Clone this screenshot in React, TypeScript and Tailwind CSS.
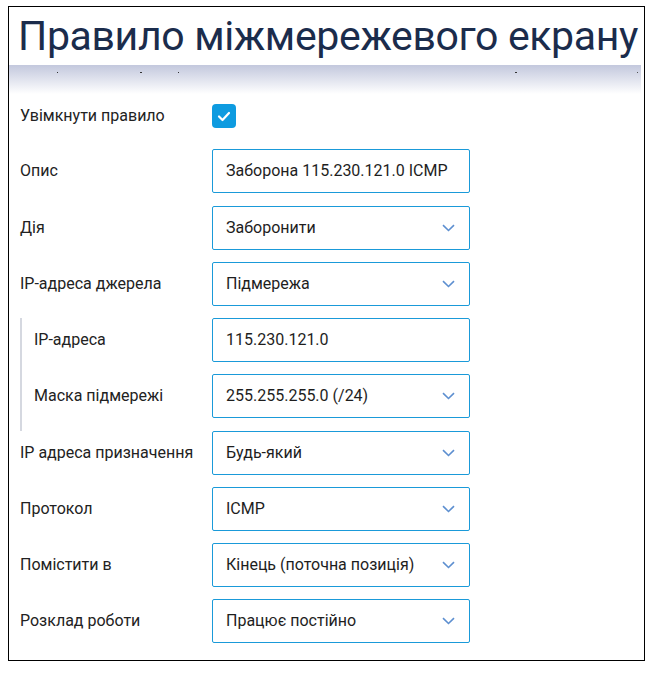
import type { ReactNode } from "react";

const font = { fontFamily: "Roboto, 'Noto Sans', 'Liberation Sans', sans-serif" };

function Chevron() {
  return (
    <svg width="13" height="8" viewBox="0 0 13 8" className="absolute right-[14px] top-1/2 -translate-y-1/2">
      <path d="M1 1.2 L6.5 6.5 L12 1.2" fill="none" stroke="#5d8fd0" strokeWidth="1.6" />
    </svg>
  );
}

function Field({ value, select }: { value: string; select?: boolean }) {
  return (
    <div className="relative flex h-11 w-[258px] items-center rounded-[2px] border border-[#1a9ad9] bg-white pl-[13px] text-[16px] text-[#1e1e1e]">
      {value}
      {select && <Chevron />}
    </div>
  );
}

function Row({ label, children, nested }: { label: string; children: ReactNode; nested?: boolean }) {
  return (
    <div className="flex h-11 items-center">
      <div className={`${nested ? "w-[178px]" : "w-[192px]"} text-[16px] text-[#222]`}>{label}</div>
      {children}
    </div>
  );
}

export default function App() {
  return (
    <div className="bg-white pl-[8px] pt-[6px] pb-[12px]" style={font}>
      <div className="w-[637px] border border-black bg-white">
        <h1 className="flex h-[58px] items-center whitespace-nowrap pl-[9px] pt-[1px] text-[41px] leading-none font-normal tracking-[-0.35px] text-[#1b2c4c]">
          Правило міжмережевого екрану
        </h1>
        <div className="relative mr-[3px] h-[29px] bg-gradient-to-b from-[#c3c8dd] to-white">
          <span className="absolute left-[48px] top-[7px] h-px w-px bg-[#333]" />
          <span className="absolute left-[131px] top-[7px] h-px w-[2px] bg-[#333]" />
          <span className="absolute left-[169px] top-[7px] h-px w-px bg-[#333]" />
          <span className="absolute left-[506px] top-[7px] h-px w-[2px] bg-[#333]" />
          <span className="absolute left-[628px] top-[7px] h-px w-px bg-[#555]" />
        </div>
        <div className="flex flex-col gap-[12.25px] pl-[11px] pb-[17px]">
          <div className="-mb-px flex h-11 items-center">
            <div className="w-[192px] text-[16px] text-[#222]">Увімкнути правило</div>
            <div className="flex h-6 w-6 items-center justify-center rounded-[4px] bg-[#0e9be0]">
              <svg width="14" height="11" viewBox="0 0 14 11">
                <path d="M2 5.5 L5.5 9 L12 2" fill="none" stroke="white" strokeWidth="2.2" strokeLinecap="round" strokeLinejoin="round" />
              </svg>
            </div>
          </div>
          <Row label="Опис">
            <Field value="Заборона 115.230.121.0 ICMP" />
          </Row>
          <Row label="Дія">
            <Field value="Заборонити" select />
          </Row>
          <Row label="IP-адреса джерела">
            <Field value="Підмережа" select />
          </Row>
          <div className="-mb-[12.25px] flex flex-col gap-[12.25px] border-l-2 border-[#d5d8e0] pb-[12.25px] pl-[12px]">
            <Row label="IP-адреса" nested>
              <Field value="115.230.121.0" />
            </Row>
            <Row label="Маска підмережі" nested>
              <Field value="255.255.255.0 (/24)" select />
            </Row>
          </div>
          <Row label="IP адреса призначення">
            <Field value="Будь-який" select />
          </Row>
          <Row label="Протокол">
            <Field value="ICMP" select />
          </Row>
          <Row label="Помістити в">
            <Field value="Кінець (поточна позиція)" select />
          </Row>
          <Row label="Розклад роботи">
            <Field value="Працює постійно" select />
          </Row>
        </div>
      </div>
    </div>
  );
}
